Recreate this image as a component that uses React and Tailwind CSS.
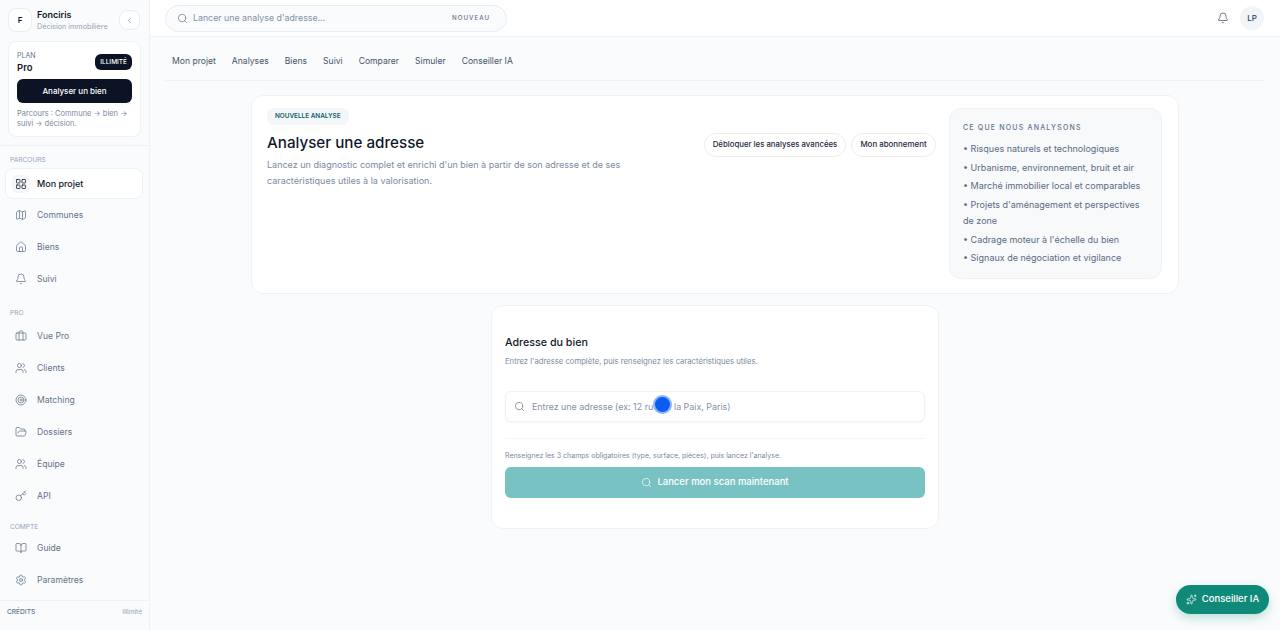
import { Search, ChevronLeft, Bell, LayoutGrid, Map, House, Briefcase, Users, Target, FolderOpen, Key, BookOpen, Settings, Sparkles } from 'lucide-react'

const parcours = [
  { label: 'Communes', icon: Map },
  { label: 'Biens', icon: House },
  { label: 'Suivi', icon: Bell },
]
const pro = [
  { label: 'Vue Pro', icon: Briefcase },
  { label: 'Clients', icon: Users },
  { label: 'Matching', icon: Target },
  { label: 'Dossiers', icon: FolderOpen },
  { label: 'Équipe', icon: Users },
  { label: 'API', icon: Key },
]
const compte = [
  { label: 'Guide', icon: BookOpen },
  { label: 'Paramètres', icon: Settings },
]
const tabs = ['Mon projet', 'Analyses', 'Biens', 'Suivi', 'Comparer', 'Simuler', 'Conseiller IA']
const analyses = [
  '• Risques naturels et technologiques',
  '• Urbanisme, environnement, bruit et air',
  '• Marché immobilier local et comparables',
  "• Projets d'aménagement et perspectives de zone",
  "• Cadrage moteur à l'échelle du bien",
  '• Signaux de négociation et vigilance',
]

function NavItem({ item }) {
  const Icon = item.icon
  return (
    <div className="flex h-8 items-center pl-[15px] text-[8.6px] text-[#64748b]">
      <Icon size={12} strokeWidth={1.5} className="mr-[10px] shrink-0" />
      {item.label}
    </div>
  )
}

function SectionLabel({ children, className = '' }) {
  return <div className={`pl-[10px] text-[6.6px] leading-[10px] text-[#94a3b8] ${className}`}>{children}</div>
}

function Sidebar() {
  return (
    <aside className="flex h-full w-[150px] shrink-0 flex-col border-r border-[#eef2f6] bg-[#f9fbfc]">
      <div className="flex h-[41px] items-start pl-2 pr-[9px] pt-2">
        <div className="flex size-6 items-center justify-center rounded-lg border border-[#e8edf3] bg-white text-[8px] font-semibold text-[#0f172a]">F</div>
        <div className="ml-[5px] flex-1">
          <div className="text-[9px] leading-[13px] font-semibold text-[#0f172a]">Fonciris</div>
          <div className="text-[7.2px] leading-[11px] text-[#94a3b8]">Décision immobilière</div>
        </div>
        <div className="mt-[2px] flex h-5 w-[21px] items-center justify-center rounded-lg border border-[#e8edf3] bg-white text-[#64748b]">
          <ChevronLeft size={9} strokeWidth={1.5} />
        </div>
      </div>
      <div className="ml-2 mr-[8px] h-[96px] rounded-lg border border-[#eef2f6] bg-white px-2 pt-[9px]">
        <div className="flex items-start justify-between">
          <div>
            <div className="text-[7px] leading-[10px] text-[#64748b]">PLAN</div>
            <div className="text-[9.5px] leading-[14px] font-semibold text-[#0f172a]">Pro</div>
          </div>
          <div className="mt-[3px] rounded-md bg-[#0b1324] px-[5px] py-[3.5px] text-[6.5px] leading-[9px] font-medium text-white">ILLIMITÉ</div>
        </div>
        <div className="mt-[4px] flex h-6 items-center justify-center rounded-md bg-[#0b1324] text-[8px] font-medium text-white">Analyser un bien</div>
        <div className="mt-[6px] text-[7.5px] leading-[10px] text-[#7c8aa0]">Parcours : Commune → bien → suivi → décision.</div>
      </div>
      <div className="mt-2 border-t border-[#eef2f6] pt-[9px]">
        <SectionLabel>PARCOURS</SectionLabel>
        <div className="ml-[5px] mr-[6px] mt-[3px] flex h-[31px] items-center rounded-lg border border-[#eef2f6] bg-white pl-[6px] text-[9px] font-medium text-[#0f172a]">
          <div className="mr-[7px] flex size-[18px] items-center justify-center rounded-md bg-[#f4f6f9]">
            <LayoutGrid size={12} strokeWidth={1.5} />
          </div>
          Mon projet
        </div>
        <div>
          {parcours.map((item) => <NavItem key={item.label} item={item} />)}
        </div>
        <SectionLabel className="mt-[13px]">PRO</SectionLabel>
        <div className="mt-[2px]">
          {pro.map((item) => <NavItem key={item.label} item={item} />)}
        </div>
        <SectionLabel className="mt-[10px]">COMPTE</SectionLabel>
        <div>
          {compte.map((item) => <NavItem key={item.label} item={item} />)}
        </div>
      </div>
      <div className="mt-[4px] flex h-[24px] items-center justify-between border-t border-[#eef2f6] px-[7px]">
        <span className="text-[6.6px] font-medium text-[#64748b]">CRÉDITS</span>
        <span className="text-[6.6px] text-[#94a3b8]">Illimité</span>
      </div>
    </aside>
  )
}

function TopBar() {
  return (
    <header className="flex h-[37px] shrink-0 items-center border-b border-[#eef2f6] bg-white pl-[15px] pr-[16px]">
      <div className="flex h-[27px] w-[342px] items-center rounded-full border border-[#e8edf3] bg-[#f9fbfc] pl-[11px] pr-[16px] text-[#64748b]">
        <Search size={11} strokeWidth={1.5} />
        <span className="ml-[5px] flex-1 text-[8.8px] text-[#8492a6]">Lancer une analyse d'adresse...</span>
        <span className="text-[6.2px] font-medium tracking-[1px]">NOUVEAU</span>
      </div>
      <div className="ml-auto flex items-center gap-[11px]">
        <Bell size={12} strokeWidth={1.5} className="text-[#475569]" />
        <div className="flex size-6 items-center justify-center rounded-full bg-[#f1f4f8] text-[8px] font-medium text-[#334155]">LP</div>
      </div>
    </header>
  )
}

function Hero() {
  return (
    <section className="mx-auto flex h-[199px] w-[928px] rounded-xl border border-[#eef2f6] bg-white pl-[15px] pr-4 pt-[12px]">
      <div className="flex-1">
        <div className="w-fit rounded-md bg-[#f3f7f9] px-2 py-[4px] text-[6.4px] leading-[9px] font-semibold text-[#0f5f68]">NOUVELLE ANALYSE</div>
        <h1 className="mt-[7px] text-[15.2px] leading-[22px] font-medium text-[#0f172a]">Analyser une adresse</h1>
        <p className="mt-[3px] w-[370px] text-[9px] leading-[16px] text-[#7c8aa0]">Lancez un diagnostic complet et enrichi d'un bien à partir de son adresse et de ses caractéristiques utiles à la valorisation.</p>
      </div>
      <div className="mr-[13px] mt-[25px] flex items-start gap-[5px]">
        <div className="flex h-6 w-[142px] items-center justify-center rounded-full border border-[#ececea] bg-white text-[7.8px] font-medium text-[#1e293b]">Débloquer les analyses avancées</div>
        <div className="flex h-6 w-[85px] items-center justify-center rounded-full border border-[#ececea] bg-white text-[7.9px] font-medium text-[#1e293b]">Mon abonnement</div>
      </div>
      <div className="h-[171px] w-[213px] shrink-0 rounded-xl border border-[#eef2f6] bg-[#f7f9fb] px-[13px] pt-[14px]">
        <div className="text-[7px] leading-[10px] font-medium tracking-[1.2px] text-[#64748b]">CE QUE NOUS ANALYSONS</div>
        <ul className="mt-[8px]">
          {analyses.map((line) => (
            <li key={line} className="mb-[2.7px] text-[9px] leading-[16px] text-[#5b6b82]">{line}</li>
          ))}
        </ul>
      </div>
    </section>
  )
}

function AddressForm() {
  return (
    <section className="relative mx-auto mt-[11px] h-[224px] w-[448px] rounded-xl border border-[#eef2f6] bg-white px-[13px] pt-[29px]">
      <h2 className="text-[10.7px] leading-[16px] font-medium text-[#0f172a]">Adresse du bien</h2>
      <p className="mt-[5px] text-[7.7px] leading-[12px] text-[#7c8aa0]">Entrez l'adresse complète, puis renseignez les caractéristiques utiles.</p>
      <div className="mt-[23px] flex h-[31px] items-center rounded-md border border-[#eef2f6] bg-white pl-[8px] shadow-[0_1px_2px_rgba(15,23,42,0.04)]">
        <Search size={11} strokeWidth={1.5} className="text-[#64748b]" />
        <span className="ml-[7px] text-[8.9px] text-[#8492a6]">Entrez une adresse (ex: 12 rue de la Paix, Paris)</span>
      </div>
      <div className="mt-4 border-t border-[#f3f5f8]" />
      <p className="mt-[12px] text-[7px] leading-[10px] text-[#7c8aa0]">Renseignez les 3 champs obligatoires (type, surface, pièces), puis lancez l'analyse.</p>
      <div className="mt-[6px] flex h-[31px] items-center justify-center rounded-md bg-[#79c2c4] text-[9.5px] font-medium text-white">
        <Search size={11} strokeWidth={1.5} className="mr-[5px]" />
        Lancer mon scan maintenant
      </div>
      {/* point bleu par-dessus le champ */}
      <div className="absolute left-[161px] top-[89px] size-[19px] rounded-full border-2 border-[#8db4fb] bg-[#0b5cf0]" />
    </section>
  )
}

export default function App() {
  return (
    <div className="relative flex h-[630px] w-[1280px] overflow-hidden bg-[#f9fbfc] font-['Inter',sans-serif]">
      <Sidebar />
      <div className="flex min-w-0 flex-1 flex-col">
        <TopBar />
        <nav className="mx-[15px] flex h-[44px] shrink-0 items-center gap-4 border-b border-[#eef2f6] pl-[7px] pt-[5px] text-[8.6px] text-[#475569]">
          {tabs.map((tab) => <span key={tab}>{tab}</span>)}
        </nav>
        <main className="pt-[14px]">
          <Hero />
          <AddressForm />
        </main>
      </div>
      <div className="absolute bottom-4 right-[11px] flex h-[29px] w-[93px] items-center justify-center gap-[5px] rounded-full bg-[#0f8a78] text-[9.5px] font-medium text-white shadow-[0_4px_10px_rgba(15,138,120,0.25)]">
        <Sparkles size={11} strokeWidth={1.5} />
        Conseiller IA
      </div>
    </div>
  )
}
